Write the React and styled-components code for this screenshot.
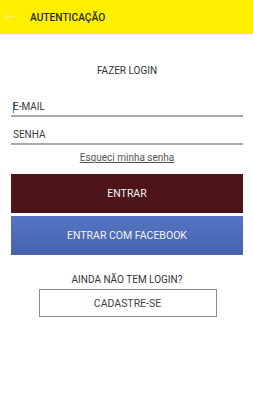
import React from "react";
import styled, { createGlobalStyle } from "styled-components";

const Global = createGlobalStyle`
  html, body { margin: 0; padding: 0; background: #fff; }
  body { font-family: Roboto, "Noto Sans", sans-serif; }
`;

const Page = styled.div`
  width: 253px;
  min-height: 400px;
  background: #fff;
  display: flex;
  flex-direction: column;
`;

const Header = styled.header`
  height: 34px;
  background: #fef000;
  display: flex;
  align-items: center;
  box-shadow: 0 1px 2px rgba(0,0,0,0.06);
`;

const Back = styled.button`
  width: 30px;
  height: 34px;
  border: 0;
  background: none;
  padding: 0 0 0 4px;
  display: flex;
  align-items: center;
  opacity: 0.3;
`;

const Title = styled.h1`
  margin: 0;
  font-size: 10.2px;
  font-weight: 500;
  color: #2a2a14;
`;

const Body = styled.main`
  display: flex;
  flex-direction: column;
  padding: 0 10px 0 11px;
`;

const Heading = styled.div`
  text-align: center;
  font-size: 10px;
  color: #333;
  margin-top: 31px;
  line-height: 12px;
`;

const Field = styled.label`
  display: flex;
  align-items: flex-end;
  height: 28px;
  box-sizing: border-box;
  border-bottom: 2px solid #a9a9a9;
  padding: 0 0 2px 2px;
  font-size: 10px;
  line-height: 12px;
  color: #3c3c3c;
  margin-top: ${p => p.$top}px;
`;

const Caret = styled.span`
  display: inline-block;
  width: 1px;
  height: 11px;
  background: #4a8a8a;
  margin-right: -1px;
`;

const Forgot = styled.a`
  text-align: center;
  font-size: 10px;
  color: #555;
  text-decoration: underline;
  margin-top: 7px;
  line-height: 12px;
`;

const Button = styled.button`
  height: ${p => p.$h}px;
  margin-top: ${p => p.$top}px;
  border: 0;
  color: #f2f2f2;
  font-family: inherit;
  font-size: 10.5px;
  background: ${p => p.$bg};
  display: flex;
  align-items: center;
  justify-content: center;
  padding: 0;
`;

const Ask = styled.div`
  text-align: center;
  font-size: 10px;
  color: #333;
  margin-top: 19px;
  line-height: 12px;
`;

const Outline = styled.button`
  align-self: center;
  width: 178px;
  height: 28px;
  margin-top: 3px;
  margin-left: 1px;
  border: 1px solid #8c8c8c;
  background: #fff;
  color: #444;
  font-family: inherit;
  font-size: 10.5px;
  padding: 0;
`;

export default function App() {
  return (
    <Page>
      <Global />
      <Header>
        <Back aria-label="Voltar">
          <svg width="12" height="10" viewBox="0 0 12 10">
            <path d="M5 1 L1 5 L5 9 M1 5 H11" stroke="#fff" strokeWidth="1.4" fill="none" />
          </svg>
        </Back>
        <Title>AUTENTICAÇÃO</Title>
      </Header>
      <Body>
        <Heading>FAZER LOGIN</Heading>
        <Field $top={12}><Caret />E-MAIL</Field>
        <Field $top={0}>SENHA</Field>
        <Forgot>Esqueci minha senha</Forgot>
        <Button $h={39} $top={10} $bg="#4d141a">ENTRAR</Button>
        <Button $h={39} $top={3} $bg="linear-gradient(#5576c4, #4563ad)">ENTRAR COM FACEBOOK</Button>
        <Ask>AINDA NÃO TEM LOGIN?</Ask>
        <Outline>CADASTRE-SE</Outline>
      </Body>
    </Page>
  );
}
